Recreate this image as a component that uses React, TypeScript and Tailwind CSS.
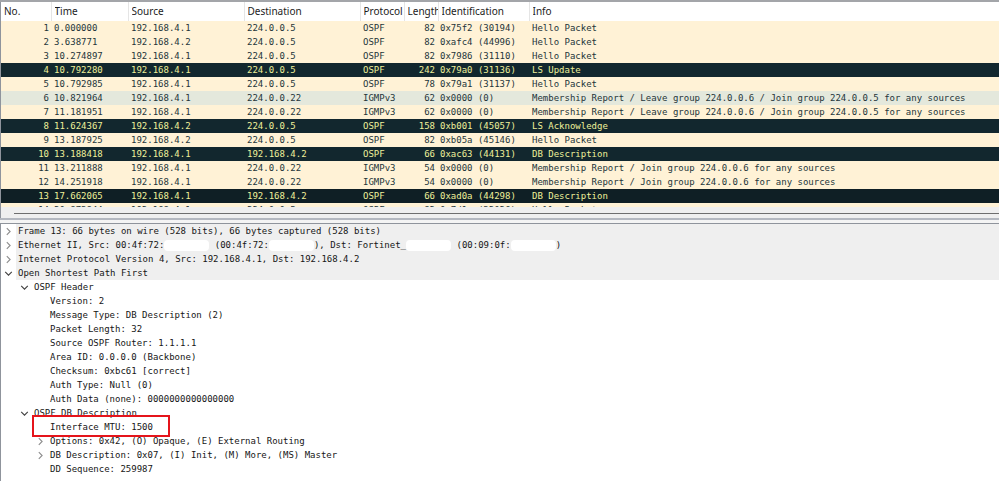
import type { ReactNode } from "react";
import clsx from "clsx";

type Packet = {
  no: number;
  time: string;
  source: string;
  destination: string;
  protocol: string;
  length: number;
  identification: string;
  info: string;
  tone?: "dark" | "hover" | "selected";
};

const LEAVE_JOIN = "Membership Report / Leave group 224.0.0.6 / Join group 224.0.0.5 for any sources";
const JOIN = "Membership Report / Join group 224.0.0.6 for any sources";

const packets: Packet[] = [
  { no: 1, time: "0.000000", source: "192.168.4.1", destination: "224.0.0.5", protocol: "OSPF", length: 82, identification: "0x75f2 (30194)", info: "Hello Packet" },
  { no: 2, time: "3.638771", source: "192.168.4.2", destination: "224.0.0.5", protocol: "OSPF", length: 82, identification: "0xafc4 (44996)", info: "Hello Packet" },
  { no: 3, time: "10.274897", source: "192.168.4.1", destination: "224.0.0.5", protocol: "OSPF", length: 82, identification: "0x7986 (31110)", info: "Hello Packet" },
  { no: 4, time: "10.792280", source: "192.168.4.1", destination: "224.0.0.5", protocol: "OSPF", length: 242, identification: "0x79a0 (31136)", info: "LS Update", tone: "dark" },
  { no: 5, time: "10.792985", source: "192.168.4.1", destination: "224.0.0.5", protocol: "OSPF", length: 78, identification: "0x79a1 (31137)", info: "Hello Packet" },
  { no: 6, time: "10.821964", source: "192.168.4.1", destination: "224.0.0.22", protocol: "IGMPv3", length: 62, identification: "0x0000 (0)", info: LEAVE_JOIN, tone: "hover" },
  { no: 7, time: "11.181951", source: "192.168.4.1", destination: "224.0.0.22", protocol: "IGMPv3", length: 62, identification: "0x0000 (0)", info: LEAVE_JOIN },
  { no: 8, time: "11.624367", source: "192.168.4.2", destination: "224.0.0.5", protocol: "OSPF", length: 158, identification: "0xb001 (45057)", info: "LS Acknowledge", tone: "dark" },
  { no: 9, time: "13.187925", source: "192.168.4.2", destination: "224.0.0.5", protocol: "OSPF", length: 82, identification: "0xb05a (45146)", info: "Hello Packet" },
  { no: 10, time: "13.188418", source: "192.168.4.1", destination: "192.168.4.2", protocol: "OSPF", length: 66, identification: "0xac63 (44131)", info: "DB Description", tone: "dark" },
  { no: 11, time: "13.211888", source: "192.168.4.1", destination: "224.0.0.22", protocol: "IGMPv3", length: 54, identification: "0x0000 (0)", info: JOIN },
  { no: 12, time: "14.251918", source: "192.168.4.1", destination: "224.0.0.22", protocol: "IGMPv3", length: 54, identification: "0x0000 (0)", info: JOIN },
  { no: 13, time: "17.662065", source: "192.168.4.1", destination: "192.168.4.2", protocol: "OSPF", length: 66, identification: "0xad0a (44298)", info: "DB Description", tone: "selected" },
  { no: 14, time: "20.873844", source: "192.168.4.1", destination: "224.0.0.5", protocol: "OSPF", length: 82, identification: "0x7d1a (32026)", info: "Hello Packet" },
];

const columns = ["No.", "Time", "Source", "Destination", "Protocol", "Length", "Identification", "Info"];

function PacketRow({ packet }: { packet: Packet }) {
  return (
    <tr
      className={clsx(
        "h-[14px]",
        !packet.tone && "bg-[#fff2d6] text-[#24353a]",
        packet.tone === "hover" && "bg-[#e4e8dc] text-[#24353a]",
        packet.tone === "dark" && "bg-[#12272e] text-[#eef09a]",
        packet.tone === "selected" && "bg-[#0f1f25] text-[#eef09a]",
      )}
    >
      <td className="p-0 pr-[2px] text-right">{packet.no}</td>
      <td className="p-0 pl-[3px]">{packet.time}</td>
      <td className="p-0 pl-[3px]">{packet.source}</td>
      <td className="p-0 pl-[3px]">{packet.destination}</td>
      <td className="p-0 pl-[3px]">{packet.protocol}</td>
      <td className="p-0 pr-[3px] text-right">{packet.length}</td>
      <td className="p-0 pl-[2px]">{packet.identification}</td>
      <td className="p-0 pl-[3px]">{packet.info}</td>
    </tr>
  );
}

function PacketList() {
  return (
    <section className="border-l border-[#8f949c]">
      <div className="h-[205px] overflow-hidden">
        <table className="w-full table-fixed border-collapse whitespace-nowrap text-left">
          <colgroup>
            <col className="w-[50px]" />
            <col className="w-[77px]" />
            <col className="w-[116px]" />
            <col className="w-[116px]" />
            <col className="w-[44px]" />
            <col className="w-[34px]" />
            <col className="w-[91px]" />
            <col />
          </colgroup>
          <thead className="font-['Noto_Sans',sans-serif] text-[10px] leading-[19px] text-[#1c1c1c]">
            <tr className="h-[19px]">
              {columns.map((column) => (
                <th key={column} className="border-r border-[#e5e5e5] p-0 pl-[3px] font-normal last:border-r-0">
                  <div className="overflow-hidden">{column}</div>
                </th>
              ))}
            </tr>
          </thead>
          <tbody>
            {packets.map((packet) => (
              <PacketRow key={packet.no} packet={packet} />
            ))}
          </tbody>
        </table>
      </div>
      <div className="h-[11px] bg-[#efefef] pt-[6px] pl-[13px]">
        <div className="h-px bg-[#6e6e6e]" />
      </div>
    </section>
  );
}

function Chevron({ open }: { open: boolean }) {
  return (
    <button type="button" aria-label={open ? "Collapse" : "Expand"} className="flex h-[14px] w-[15px] shrink-0 items-center justify-center">
      <svg className="size-[9px]" viewBox="0 0 9 9" fill="none" stroke={open ? "#404040" : "#8c8c8c"} strokeWidth="1.1">
        <path d={open ? "M1.2 2.8 4.5 6.1 7.8 2.8" : "M2.8 1.2 6.1 4.5 2.8 7.8"} />
      </svg>
    </button>
  );
}

function TreeItem({ label, open, leaf, shaded, marked, children }: {
  label: ReactNode;
  open?: boolean;
  leaf?: boolean;
  shaded?: boolean;
  marked?: boolean;
  children?: ReactNode;
}) {
  return (
    <li>
      <div className="relative flex h-[14px] items-center">
        {leaf ? <span className="w-[15px] shrink-0" /> : <Chevron open={!!open} />}
        <span className={clsx("flex h-[14px] grow items-center whitespace-pre pl-[2px]", shaded && "bg-[#efefef]")}>{label}</span>
        {marked && <span className="absolute -top-[5px] -left-px h-[22px] w-[138px] border-2 border-[#e5141b]" />}
      </div>
      {children && <ul className="pl-4">{children}</ul>}
    </li>
  );
}

function Masked() {
  return <span className="h-[11px] w-[45px] rounded-sm bg-white" />;
}

function EthernetLabel() {
  return (
    <>
      {"Ethernet II, Src: 00:4f:72:"}
      <Masked />
      {" (00:4f:72:"}
      <Masked />
      {"), Dst: Fortinet_"}
      <Masked />
      {" (00:09:0f:"}
      <Masked />
      {")"}
    </>
  );
}

function PacketDetails() {
  return (
    <section className="grow border-t border-l border-[#8f949c] bg-white text-[#161616]">
      <ul>
        <TreeItem shaded label="Frame 13: 66 bytes on wire (528 bits), 66 bytes captured (528 bits)" />
        <TreeItem shaded label={<EthernetLabel />} />
        <TreeItem shaded label="Internet Protocol Version 4, Src: 192.168.4.1, Dst: 192.168.4.2" />
        <TreeItem shaded open label="Open Shortest Path First">
          <TreeItem open label="OSPF Header">
            <TreeItem leaf label="Version: 2" />
            <TreeItem leaf label="Message Type: DB Description (2)" />
            <TreeItem leaf label="Packet Length: 32" />
            <TreeItem leaf label="Source OSPF Router: 1.1.1.1" />
            <TreeItem leaf label="Area ID: 0.0.0.0 (Backbone)" />
            <TreeItem leaf label="Checksum: 0xbc61 [correct]" />
            <TreeItem leaf label="Auth Type: Null (0)" />
            <TreeItem leaf label="Auth Data (none): 0000000000000000" />
          </TreeItem>
          <TreeItem open label="OSPF DB Description">
            <TreeItem leaf marked label="Interface MTU: 1500" />
            <TreeItem label="Options: 0x42, (O) Opaque, (E) External Routing" />
            <TreeItem label="DB Description: 0x07, (I) Init, (M) More, (MS) Master" />
            <TreeItem leaf label="DD Sequence: 259987" />
          </TreeItem>
        </TreeItem>
      </ul>
    </section>
  );
}

export default function App() {
  return (
    <main className="flex min-h-screen flex-col border-t-2 border-[#a3a5a9] bg-white font-['DejaVu_Sans_Mono',monospace] text-[9px] leading-[14px]">
      <PacketList />
      <div className="h-[5px] border-t-2 border-[#b4b8c0] bg-[#f4f4f4]" />
      <PacketDetails />
    </main>
  );
}
